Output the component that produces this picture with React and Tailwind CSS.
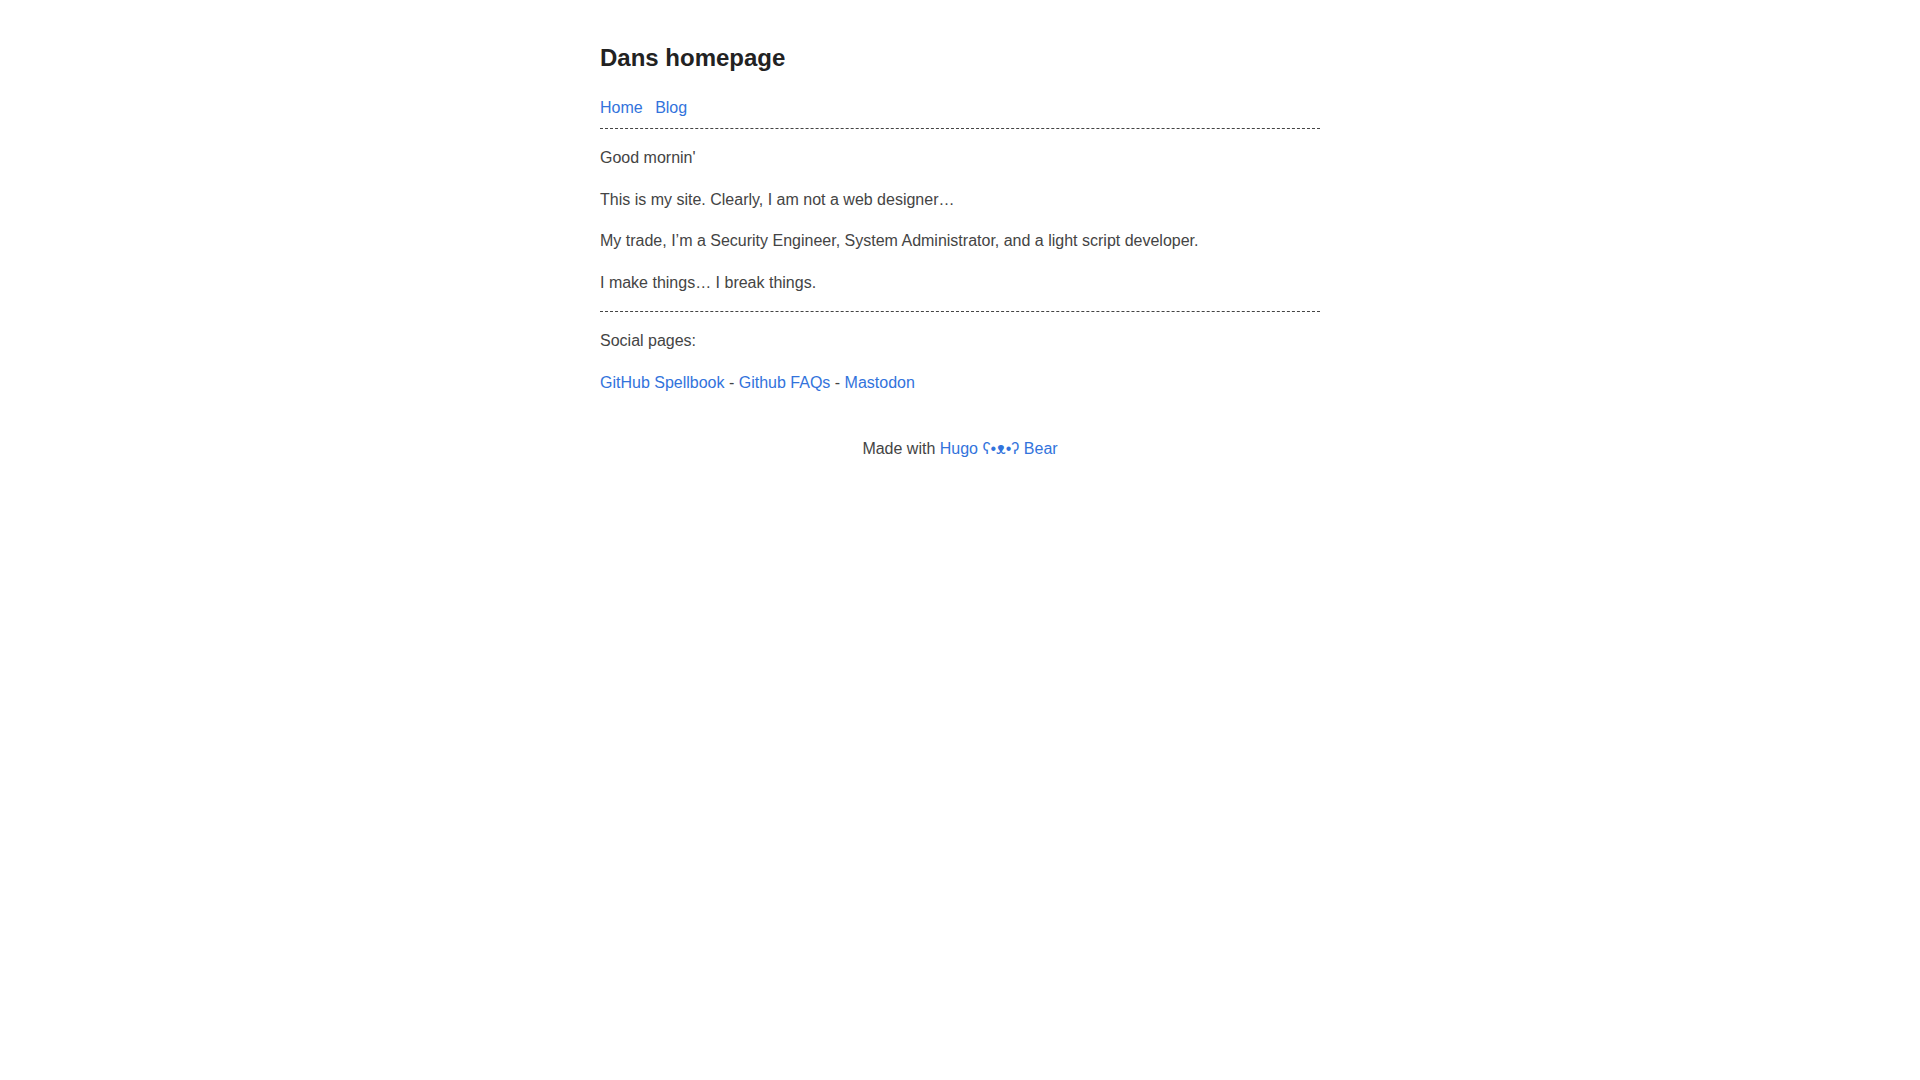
export default function App() {
  const link = 'text-[#3273dc] no-underline'

  return (
    <div className="min-h-screen bg-white">
      <div className="mx-auto max-w-[760px] p-5 text-left text-[16px] leading-[1.6] text-[#444] font-['Liberation_Sans',Arial,sans-serif] break-words">
        {/* Header */}
        <header>
          <a href="#" className="no-underline">
            <h2 className="my-[20px] text-[24px] leading-[1.5] font-bold text-[#222]">Dans homepage</h2>
          </a>
          <nav className="leading-6">
            <a href="#" className={`${link} mr-[8px]`}>Home</a>{' '}
            <a href="#" className={`${link} mr-[8px]`}>Blog</a>
          </nav>
        </header>

        <main>
          <hr className="my-2 h-0 border-0 border-t border-dashed border-[#444]" />
          <p className="my-4">Good mornin'</p>
          <p className="my-4">This is my site. Clearly, I am not a web designer…</p>
          <p className="my-4">My trade, I’m a Security Engineer, System Administrator, and a light script developer.</p>
          <p className="my-4">I make things… I break things.</p>
          <hr className="my-2 h-0 border-0 border-t border-dashed border-[#444]" />
          <p className="my-4">Social pages:</p>
          <p className="my-4">
            <a href="#" className={link}>GitHub Spellbook</a> - <a href="#" className={link}>Github FAQs</a> -{' '}
            <a href="#" className={link}>Mastodon</a>
          </p>
        </main>

        {/* Footer */}
        <footer className="p-[25px] text-center leading-[23px]">
          Made with <a href="#" className={link}>Hugo ʕ•ᴥ•ʔ Bear</a>
        </footer>
      </div>
    </div>
  )
}
